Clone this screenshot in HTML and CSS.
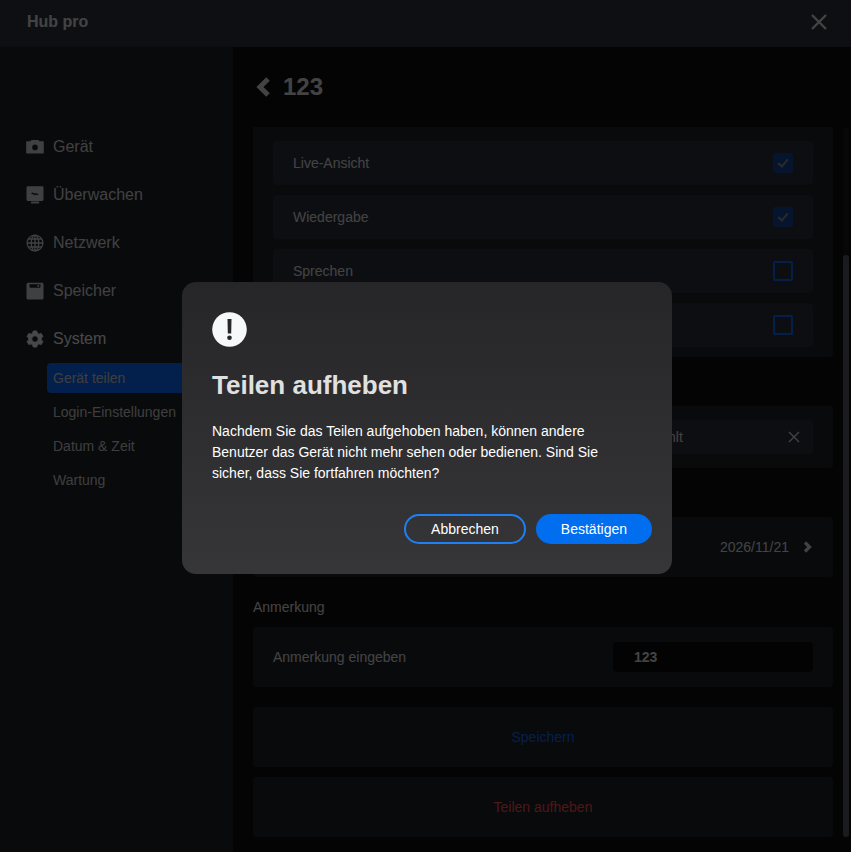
FILE: index.html
```html
<!DOCTYPE html>
<html lang="de">
<head>
  <meta charset="utf-8">
  <title>Hub pro</title>
  <meta name="viewport" content="width=device-width, initial-scale=1.0">
  <link rel="stylesheet" href="styles.css">
</head>
<body>
  <div class="window">
    <header class="topbar">
      <span class="topbar-title">Hub pro</span>
      <button type="button" class="icon-btn" aria-label="Schließen">
        <svg width="18" height="18" viewBox="0 0 18 18"><path d="M2 2l14 14M16 2L2 16" stroke="currentColor" stroke-width="2.4"/></svg>
      </button>
    </header>

    <div class="body">
      <nav class="sidebar">
        <a href="#" class="nav-item">
          <svg width="18" height="18" viewBox="0 0 18 18" fill="currentColor"><path fill-rule="evenodd" d="M5.500 2h7l1 1.300H17a.8.8 0 0 1 .8.8v10.700a.8.8 0 0 1-.8.8H1a.8.8 0 0 1-.8-.8V4.100a.8.8 0 0 1 .8-.8h3.500zM9 6.600a2.800 2.800 0 1 0 0 5.600 2.800 2.800 0 0 0 0-5.600z"/></svg>
          Gerät
        </a>
        <a href="#" class="nav-item">
          <svg width="18" height="18" viewBox="0 0 18 18" fill="currentColor"><path fill-rule="evenodd" d="M1.800.3h14.400a1.300 1.300 0 0 1 1.300 1.300v12a1.300 1.300 0 0 1-1.300 1.300H1.800a1.300 1.300 0 0 1-1.300-1.300v-12A1.300 1.300 0 0 1 1.800.3zM5.300 7l1.700-.6 1.800 1.400 1.400-.9 2.300 1.400-.6 1-1.600-.9-1.500 1-1.900-1.300-1 .3z"/><rect x="4.800" y="15.500" width="8.500" height="2" rx="1"/></svg>
          Überwachen
        </a>
        <a href="#" class="nav-item">
          <svg width="18" height="18" viewBox="0 0 18 18" fill="none" stroke="currentColor" stroke-width="1.300"><circle cx="9" cy="9" r="7.900"/><ellipse cx="9" cy="9" rx="3.800" ry="7.900"/><path d="M9 1v16M1 9h16M2.300 5h13.400M2.300 13h13.400"/></svg>
          Netzwerk
        </a>
        <a href="#" class="nav-item">
          <svg width="18" height="18" viewBox="0 0 18 18" fill="currentColor"><path fill-rule="evenodd" d="M2 .8h14.500l1 1V16a1.500 1.500 0 0 1-1.500 1.500H2A1.500 1.500 0 0 1 .5 16V2.300A1.500 1.500 0 0 1 2 .8zM3.500 2.200V5a.8.8 0 0 0 .8.8h9.400a.8.8 0 0 0 .8-.8V2.200z"/><path d="M11.500 2.800h1.600v2h-1.600z"/></svg>
          Speicher
        </a>
        <a href="#" class="nav-item nav-item-open">
          <svg width="18" height="18" viewBox="0 0 18 18" fill="currentColor"><path fill-rule="evenodd" stroke="currentColor" stroke-width="1" stroke-linejoin="round" d="M7.300 1h3.400l.6 2.200 1.700 1 2.200-.7 1.700 3-1.600 1.600v1.800l1.600 1.600-1.700 3-2.200-.7-1.700 1-.6 2.200H7.300l-.6-2.200-1.700-1-2.200.7-1.700-3 1.600-1.600V8.100L1.100 6.500l1.700-3 2.200.7 1.700-1zM9 5.700a3.300 3.300 0 1 0 0 6.600 3.300 3.300 0 0 0 0-6.600z"/></svg>
          System
        </a>
        <div class="subnav">
          <a href="#" class="subnav-item active">Gerät teilen</a>
          <a href="#" class="subnav-item">Login-Einstellungen</a>
          <a href="#" class="subnav-item">Datum &amp; Zeit</a>
          <a href="#" class="subnav-item">Wartung</a>
        </div>
      </nav>

      <main class="content">
        <div class="page-head">
          <button type="button" class="icon-btn" aria-label="Zurück">
            <svg width="18" height="20" viewBox="0 0 18 20"><path d="M15 2L7 10l8 8" fill="none" stroke="currentColor" stroke-width="5"/></svg>
          </button>
          <h1>123</h1>
        </div>

        <div class="scroll-area">
          <div class="sections">
            <section class="panel panel-rows">
              <label class="row">Live-Ansicht <input type="checkbox" class="check" checked disabled></label>
              <label class="row">Wiedergabe <input type="checkbox" class="check" checked disabled></label>
              <label class="row">Sprechen <input type="checkbox" class="check"></label>
              <div class="row row-end"><input type="checkbox" class="check" aria-label="Berechtigung"></div>
            </section>

            <section class="panel panel-picked">
              <div class="row row-small row-end">
                <div class="picked">
                  <span>ausgewählt</span>
                  <button type="button" class="icon-btn" aria-label="Entfernen">
                    <svg width="12" height="12" viewBox="0 0 12 12"><path d="M1 1l10 10M11 1L1 11" stroke="currentColor" stroke-width="1.400"/></svg>
                  </button>
                </div>
              </div>
            </section>

            <section class="panel line row-end">
              <button type="button" class="date-btn">
                2026/11/21
                <svg width="10" height="12" viewBox="0 0 10 12"><path d="M2 1.500L6.500 6 2 10.500" fill="none" stroke="currentColor" stroke-width="3.200"/></svg>
              </button>
            </section>

            <section class="note">
              <h2>Anmerkung</h2>
              <div class="panel line">
                <label for="note">Anmerkung eingeben</label>
                <input type="text" id="note" class="note-input" value="123">
              </div>
            </section>

            <div class="actions">
              <button type="button" class="panel action action-save">Speichern</button>
              <button type="button" class="panel action action-remove">Teilen aufheben</button>
            </div>
          </div>
          <div class="scrollbar"><div class="scrollbar-thumb"></div></div>
        </div>
      </main>
    </div>
  </div>

  <div class="overlay">
    <div class="modal" role="dialog" aria-modal="true" aria-labelledby="modal-title">
      <svg class="modal-icon" width="35" height="35" viewBox="0 0 35 35"><circle cx="17.500" cy="17.500" r="17.300" fill="#f7f8fa"/><path d="M15.500 7h4l-.3 14.500h-3.400z" fill="#262729"/><circle cx="17.500" cy="25.800" r="2.300" fill="#262729"/></svg>
      <h2 id="modal-title">Teilen aufheben</h2>
      <p>Nachdem Sie das Teilen aufgehoben haben, können andere Benutzer das Gerät nicht mehr sehen oder bedienen. Sind Sie sicher, dass Sie fortfahren möchten?</p>
      <div class="modal-buttons">
        <button type="button" class="btn btn-outline">Abbrechen</button>
        <button type="button" class="btn">Bestätigen</button>
      </div>
    </div>
  </div>
</body>
</html>
```
FILE: styles.css
```css
* {
  box-sizing: border-box;
}
body {
  margin: 0;
  font-family: "Liberation Sans", Arial, sans-serif;
  font-size: 14px;
  color: #e0e0e0;
  background-color: #0e0e0e;
}
button, input {
  font: inherit;
}
button {
  padding: 0;
  border: none;
  background: none;
  color: inherit;
  cursor: pointer;
}
svg {
  display: block;
  flex: none;
}
h1, h2, p {
  margin: 0;
}
.window {
  display: flex;
  flex-direction: column;
  min-height: 100vh;
}
.topbar {
  display: flex;
  align-items: center;
  justify-content: space-between;
  height: 47px;
  padding: 0 23px 4px 27px;
  background-color: #2f323f;
}
.topbar-title {
  font-size: 16px;
  font-weight: bold;
}
.body {
  display: flex;
  flex: 1;
}

/* sidebar */
.sidebar {
  flex: none;
  width: 233px;
  padding-top: 76px;
  background-color: #1f2228;
}
.nav-item {
  display: flex;
  align-items: center;
  gap: 9px;
  height: 48px;
  padding-left: 26px;
  font-size: 16px;
  color: #d8d8d8;
  text-decoration: none;
}
.nav-item-open {
  color: #f0f0f0;
}
.subnav {
  display: flex;
  flex-direction: column;
  gap: 4px;
  padding-left: 47px;
}
.subnav-item {
  padding-left: 6px;
  line-height: 30px;
  border-radius: 4px;
  color: #d0d0d0;
  text-decoration: none;
}
.subnav-item.active {
  background-color: #0d6bfd;
}

/* content */
.content {
  flex: 1;
  padding-left: 20px;
}
.page-head {
  display: flex;
  align-items: center;
  gap: 12px;
  height: 80px;
}
.page-head h1 {
  font-size: 24px;
}
.scroll-area {
  display: flex;
  gap: 10px;
  padding-right: 2px;
}
.sections {
  flex: 1;
}
.panel {
  margin-bottom: 49px;
  border-radius: 4px;
  background-color: #1f2228;
}
.panel-rows {
  display: flex;
  flex-direction: column;
  gap: 10px;
  padding: 14px 20px 10px;
  border-radius: 0 0 4px 4px;
}
.panel-picked {
  padding: 14px 20px;
}
.row {
  display: flex;
  align-items: center;
  justify-content: space-between;
  height: 44px;
  padding: 0 20px;
  border-radius: 4px;
  background-color: #2c2f3a;
}
.row-small {
  height: 34px;
  padding: 0 13px;
}
.row-end {
  justify-content: flex-end;
}
.check {
  appearance: none;
  display: grid;
  place-items: center;
  width: 20px;
  height: 20px;
  margin: 0;
  border: 2px solid #0d6bfd;
  border-radius: 2px;
}
.check:checked {
  border: none;
  background-color: #144696;
}
.check:checked::before {
  content: "";
  box-sizing: border-box;
  width: 6px;
  height: 10px;
  margin-bottom: 3px;
  border: solid #8c8c8c;
  border-width: 0 2px 2px 0;
  transform: rotate(40deg);
}
.picked {
  display: flex;
  align-items: center;
  justify-content: space-between;
  width: 188px;
}
.line {
  display: flex;
  align-items: center;
  justify-content: space-between;
  height: 60px;
  padding: 0 20px;
}
.line.row-end {
  justify-content: flex-end;
  margin-bottom: 20px;
}
.date-btn {
  display: flex;
  align-items: center;
  gap: 14px;
}
.note h2 {
  margin-bottom: 10px;
  font-size: 14px;
  font-weight: normal;
  line-height: 20px;
}
.note .panel {
  margin-bottom: 20px;
}
.note-input {
  width: 200px;
  height: 30px;
  padding: 0 21px;
  border: none;
  border-radius: 4px;
  background-color: #0a0a0a;
  color: #e0e0e0;
  font-weight: bold;
}
.actions {
  display: flex;
  flex-direction: column;
  gap: 10px;
}
.action {
  height: 60px;
  margin: 0;
  background-color: #1f2228;
}
.action-save {
  color: #0d6bfd;
}
.action-remove {
  color: #fa5050;
}
.scrollbar {
  display: flex;
  flex-direction: column;
  justify-content: flex-end;
  width: 6px;
  border-radius: 3px;
  background-color: #191919;
}
.scrollbar-thumb {
  height: 82%;
  border-radius: 3px;
  background-color: #565d69;
}

/* dialog */
.overlay {
  position: fixed;
  inset: 0;
  display: flex;
  align-items: center;
  justify-content: center;
  padding: 3px 0 0 3px;
  background-color: rgba(0, 0, 0, 0.7);
}
.modal {
  width: 490px;
  padding: 30px 20px 30px 30px;
  border-radius: 14px;
  background: linear-gradient(#262628, #363638);
}
.modal h2 {
  margin-top: 22px;
  font-size: 26px;
  line-height: 32px;
}
.modal p {
  margin: 20px 30px 30px 0;
  line-height: 21px;
  color: #fff;
}
.modal-buttons {
  display: flex;
  justify-content: flex-end;
  gap: 10px;
}
.btn {
  height: 30px;
  padding: 0 25px;
  border-radius: 15px;
  background-color: #006eee;
  color: #fff;
}
.btn-outline {
  border: 2px solid #1f80f5;
  background-color: transparent;
}
```
